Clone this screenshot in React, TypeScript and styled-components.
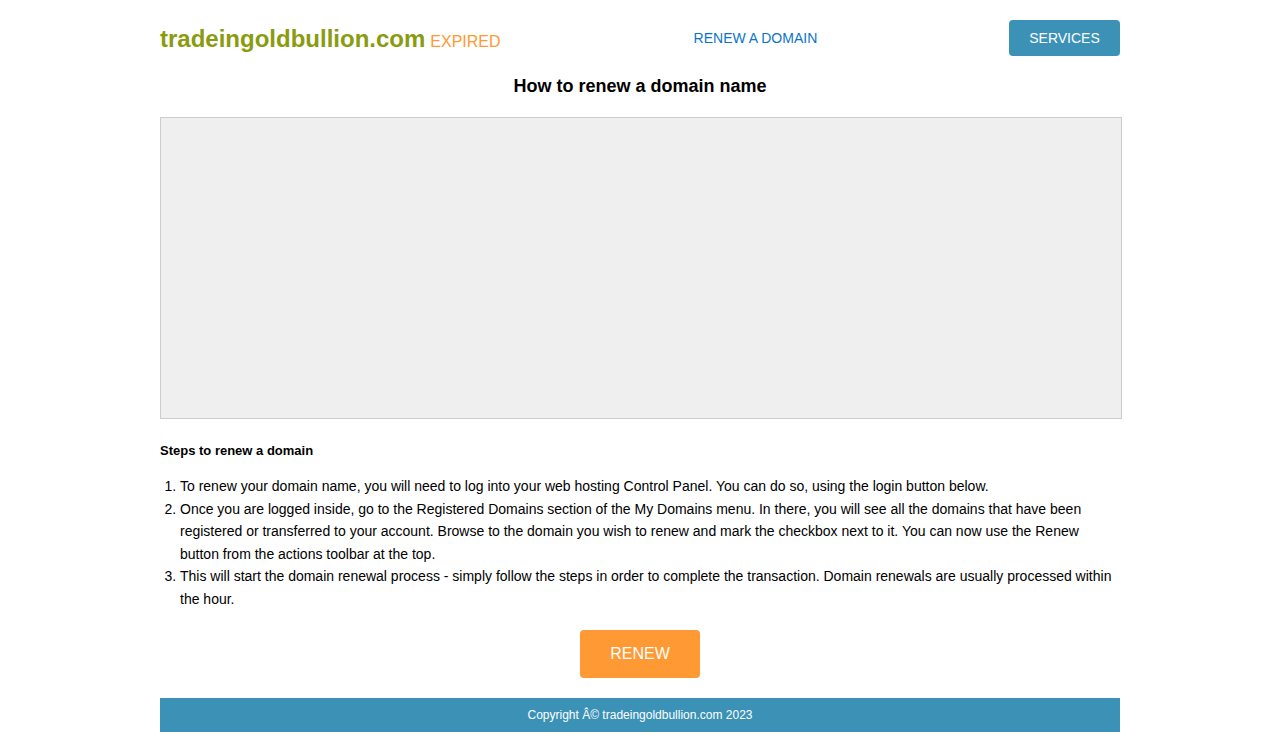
import React from "react";
import styled, { createGlobalStyle } from "styled-components";

const Global = createGlobalStyle`
  html, body { margin: 0; padding: 0; background: #fff; }
  body { font-family: "Liberation Sans", Arial, sans-serif; color: #000; }
`;

const Page = styled.div`
  width: 960px;
  margin: 0 auto;
  display: flex;
  flex-direction: column;
`;

const Header = styled.header`
  display: flex;
  align-items: center;
  height: 36px;
  margin-top: 20px;
`;

const Logo = styled.div`
  display: flex;
  align-items: baseline;
  gap: 5px;
  margin-top: 1px;
`;

const LogoName = styled.span`
  font-size: 24px;
  font-weight: bold;
  color: #8a9b0f;
`;

const LogoTag = styled.span`
  font-size: 16px;
  color: #ff9933;
`;

const NavLink = styled.a`
  font-size: 14px;
  color: #0b75c9;
  text-decoration: none;
  margin-left: 193px;
`;

const ServicesButton = styled.button`
  margin-left: auto;
  width: 111px;
  height: 36px;
  border: none;
  border-radius: 4px;
  background: #3b92b6;
  color: #fff;
  font-family: "Liberation Sans", Arial, sans-serif;
  font-size: 14px;
  padding: 0;
`;

const Title = styled.h1`
  margin: 20px 0 0;
  text-align: center;
  font-size: 18px;
  font-weight: bold;
  line-height: 20px;
`;

const VideoBox = styled.div`
  margin-top: 21px;
  width: 960px;
  height: 300px;
  background: #efefef;
  border: 1px solid #cccccc;
`;

const StepsTitle = styled.h2`
  margin: 24px 0 0;
  font-size: 13px;
  font-weight: bold;
  line-height: 16px;
`;

const Steps = styled.ol`
  margin: 16px 0 0;
  padding-left: 20px;
  font-size: 14px;
  line-height: 22.5px;
`;

const ButtonRow = styled.div`
  display: flex;
  justify-content: center;
  margin-top: 20px;
`;

const RenewButton = styled.button`
  width: 120px;
  height: 48px;
  border: none;
  border-radius: 4px;
  background: #ff9933;
  color: #fff;
  font-family: "Liberation Sans", Arial, sans-serif;
  font-size: 16px;
  padding: 0;
`;

const Footer = styled.footer`
  margin-top: 20px;
  height: 34px;
  background: #3b92b6;
  color: #fff;
  font-size: 12px;
  display: flex;
  align-items: center;
  justify-content: center;
`;

export default function App() {
  return (
    <>
      <Global />
      <Page>
        <Header>
          <Logo>
            <LogoName>tradeingoldbullion.com</LogoName>
            <LogoTag>EXPIRED</LogoTag>
          </Logo>
          <NavLink href="#">RENEW A DOMAIN</NavLink>
          <ServicesButton>SERVICES</ServicesButton>
        </Header>
        <Title>How to renew a domain name</Title>
        <VideoBox />
        <StepsTitle>Steps to renew a domain</StepsTitle>
        <Steps>
          <li>
            To renew your domain name, you will need to log into your web hosting Control Panel. You can do so, using the login button below.
          </li>
          <li>
            Once you are logged inside, go to the Registered Domains section of the My Domains menu. In there, you will see all the domains that have been registered or transferred to your account. Browse to the domain you wish to renew and mark the checkbox next to it. You can now use the Renew button from the actions toolbar at the top.
          </li>
          <li>
            This will start the domain renewal process - simply follow the steps in order to complete the transaction. Domain renewals are usually processed within the hour.
          </li>
        </Steps>
        <ButtonRow>
          <RenewButton>RENEW</RenewButton>
        </ButtonRow>
        <Footer>Copyright Â© tradeingoldbullion.com 2023</Footer>
      </Page>
    </>
  );
}
